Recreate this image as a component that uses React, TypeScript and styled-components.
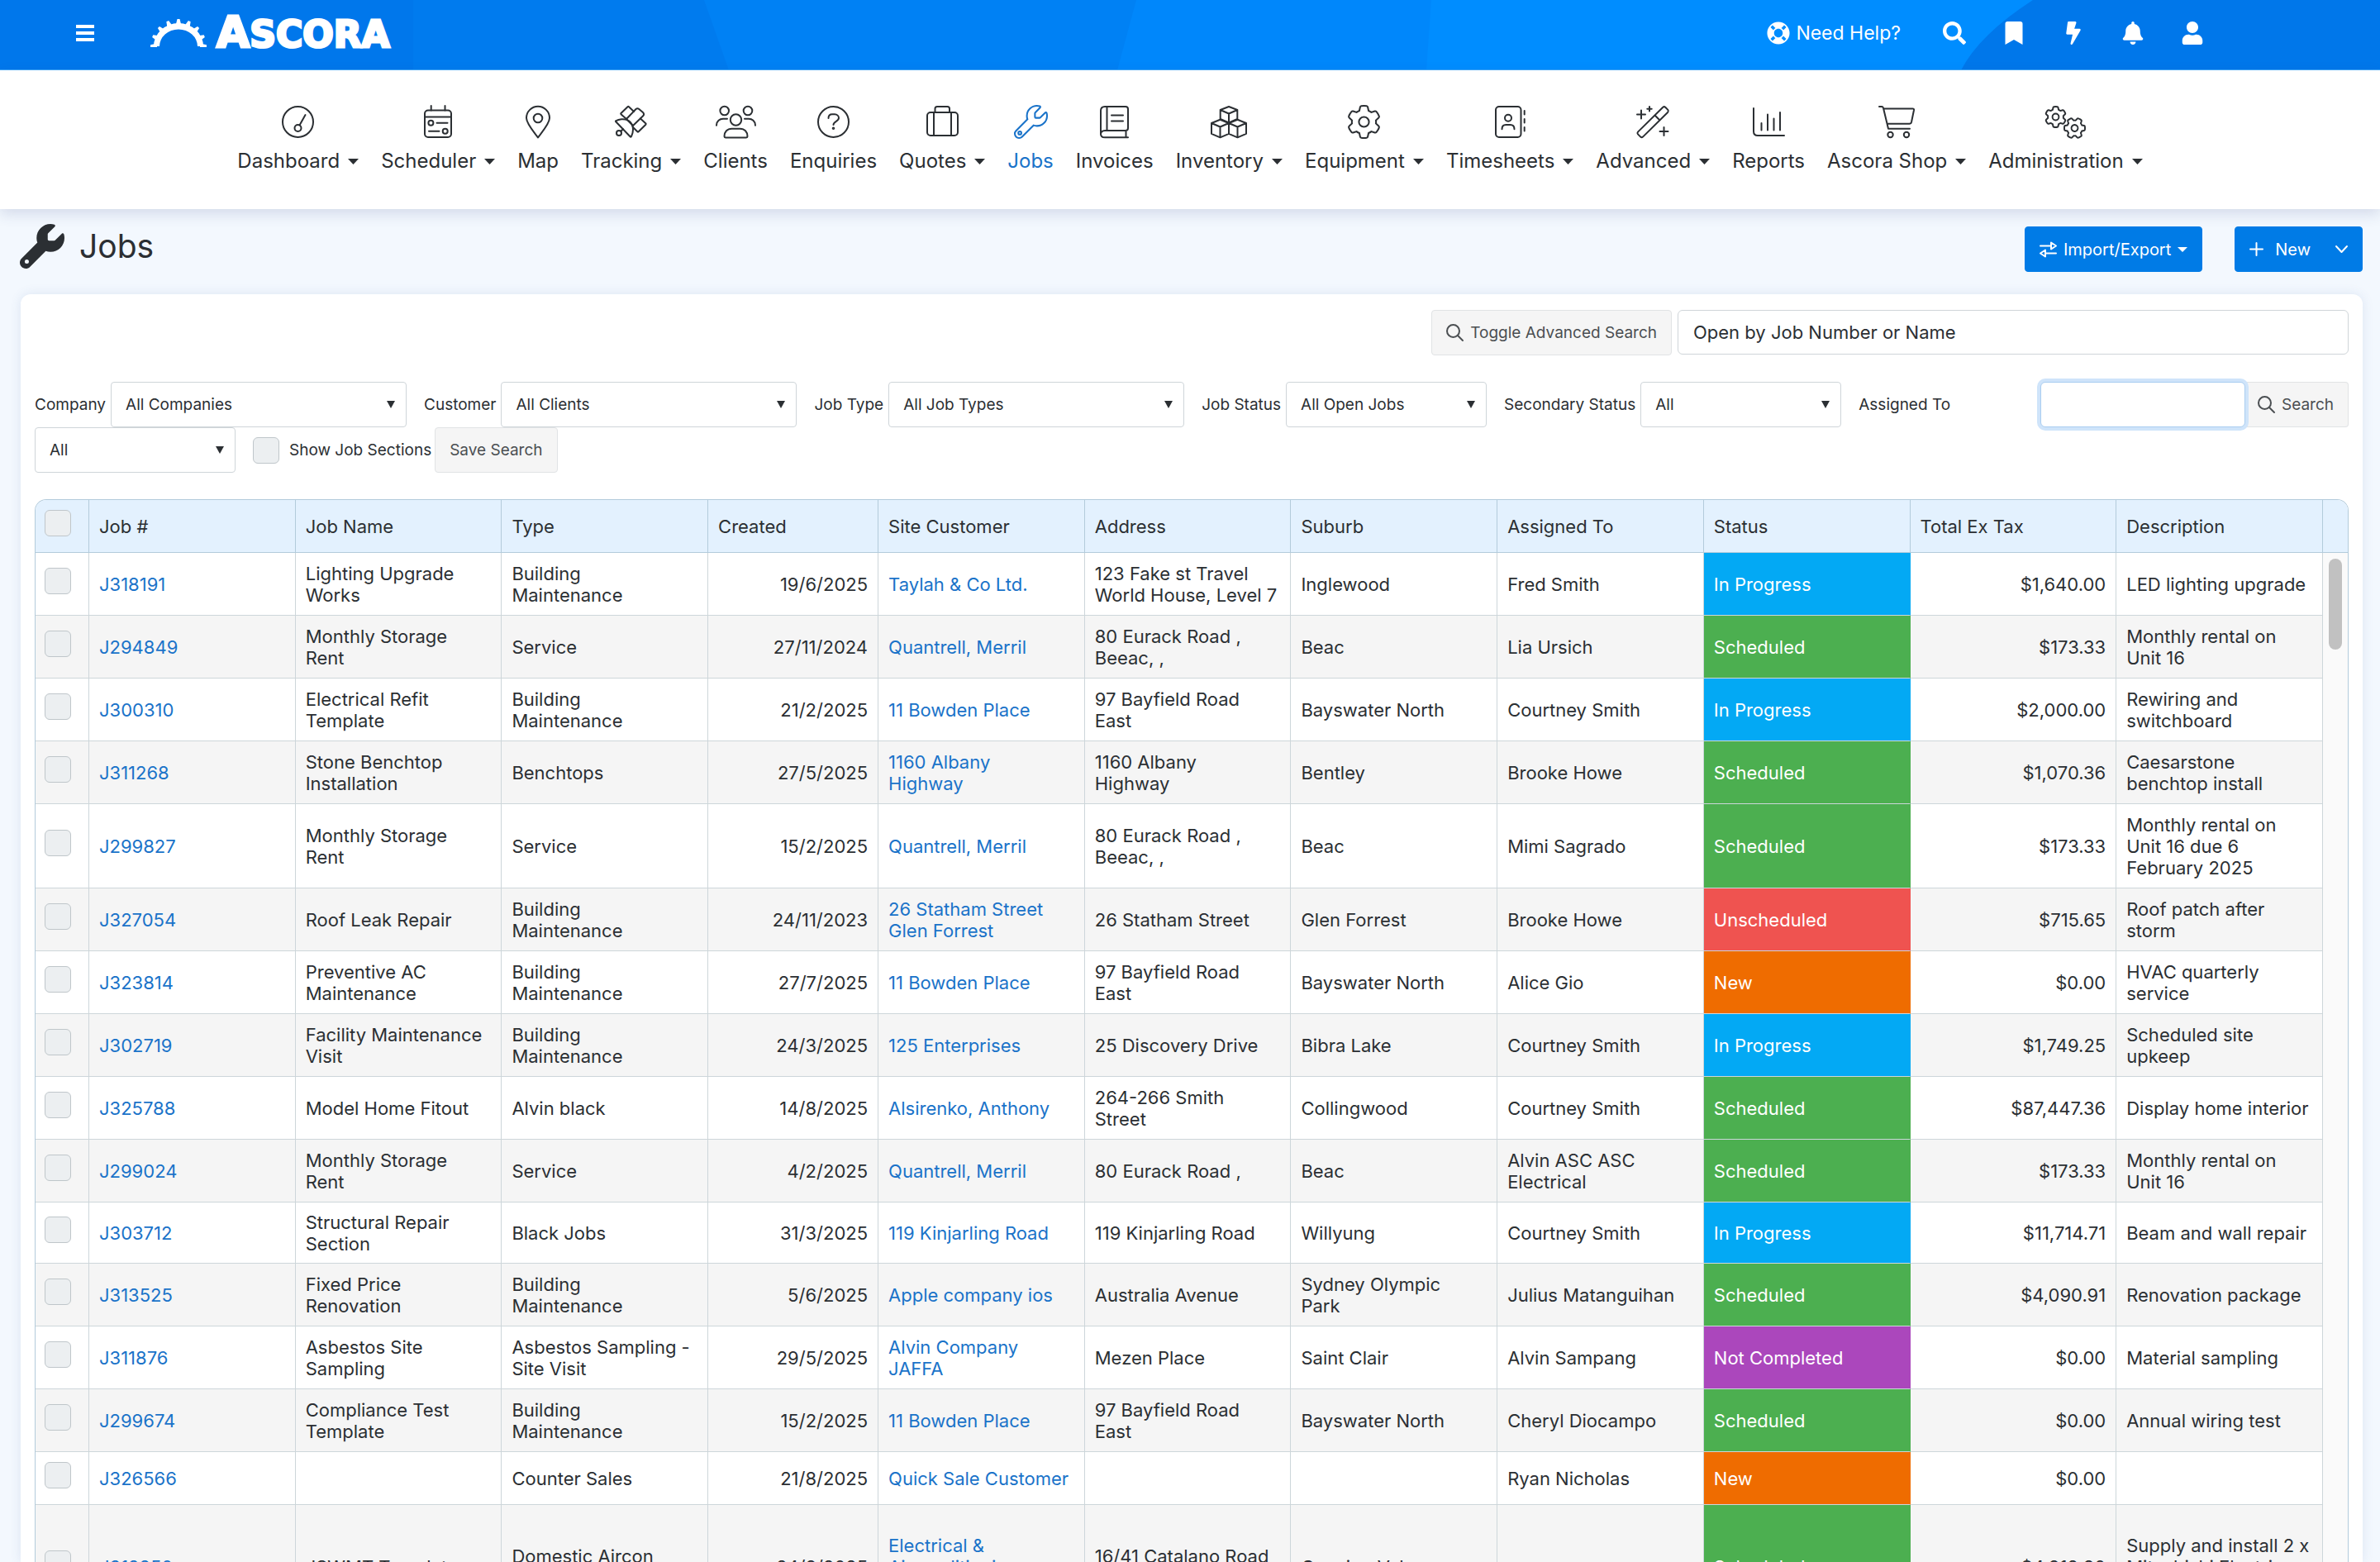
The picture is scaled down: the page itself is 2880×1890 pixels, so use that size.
import React from "react";
import styled, { createGlobalStyle, css } from "styled-components";
import { FaBell, FaBolt, FaBookmark, FaLifeRing, FaSearch, FaUser } from "react-icons/fa";
import { FaGear, FaWrench } from "react-icons/fa6";

const color = {
  text: "#2b2f33",
  link: "#1a73c9",
  primary: "#007be6",
  page: "#f3f8fe",
  soft: "#f5f5f5",
  line: "#cdd6da",
  control: "#cfd5d9",
  head: "#e3f1fe",
  headLine: "#b3cbdb",
};

const GlobalStyle = createGlobalStyle`
  *, *::before, *::after { box-sizing: border-box; }
  body {
    margin: 0;
    background: ${color.page};
    color: ${color.text};
    font-family: Inter, "Liberation Sans", sans-serif;
    font-size: 22px;
  }
  button, input, select { font: inherit; color: inherit; margin: 0; }
  a { text-decoration: none; }
`;

/* ---------- shell ---------- */

const Page = styled.div`
  display: flex;
  flex-direction: column;
  height: 100vh;
  overflow: hidden;
`;

const TopBar = styled.header`
  position: relative;
  display: flex;
  align-items: center;
  justify-content: space-between;
  height: 85px;
  flex: none;
  padding: 0 213px 0 92px;
  background: #008dff;
  color: #fff;
`;

const Backdrop = styled.svg`
  position: absolute;
  inset: 0;
  width: 100%;
  height: 100%;
`;

const BarGroup = styled.div<{ $gap: number }>`
  position: relative;
  display: flex;
  align-items: center;
  gap: ${(p) => p.$gap}px;
  padding-bottom: 6px;
`;

const IconButton = styled.button`
  display: flex;
  padding: 0;
  border: 0;
  background: none;
  color: #fff;
  cursor: pointer;
`;

const Brand = styled.a`
  display: flex;
  align-items: flex-end;
  gap: 12px;
  color: #fff;
`;

const BrandName = styled.span`
  display: block;
  font-family: "DejaVu Sans", sans-serif;
  font-weight: 700;
  font-size: 44px;
  line-height: 30px;
  -webkit-text-stroke: 3px #fff;

  &::first-letter {
    font-size: 52px;
  }
`;

const HelpLink = styled.a`
  display: flex;
  align-items: center;
  gap: 7px;
  margin-right: 7px;
  color: #fff;
  font-size: 23px;
`;

/* ---------- main navigation ---------- */

const Nav = styled.nav`
  position: relative;
  display: flex;
  justify-content: center;
  gap: 27px;
  flex: none;
  padding: 43px 0;
  background: #fff;
  box-shadow: 0 6px 16px rgba(50, 70, 130, 0.16);
`;

const NavItem = styled.a<{ $active?: boolean }>`
  display: flex;
  flex-direction: column;
  align-items: center;
  gap: 13px;
  color: ${(p) => (p.$active ? color.link : color.text)};
`;

const NavLabel = styled.span`
  display: flex;
  align-items: center;
  gap: 10px;
  font-size: 24px;
  line-height: 30px;
`;

const Outline = styled.svg`
  overflow: visible;
  fill: none;
  stroke: currentColor;
  stroke-width: 2;
  stroke-linecap: round;
  stroke-linejoin: round;
`;

const OutlineWrench = styled(FaWrench)`
  overflow: visible;
  && {
    fill: none;
    stroke: currentColor;
    stroke-width: 27;
  }
`;

const OutlineGear = styled(FaGear)`
  overflow: visible;
  && {
    fill: none;
    stroke: currentColor;
    stroke-width: ${(p) => (Number(p.size) < 30 ? 40 : 27)};
  }
`;

/* ---------- title row ---------- */

const TitleRow = styled.div`
  display: flex;
  justify-content: space-between;
  align-items: flex-start;
  flex: none;
  height: 103px;
  padding: 17px 21px 0 24px;
`;

const Title = styled.h1`
  display: flex;
  align-items: center;
  gap: 18px;
  margin: 0;
  font-size: 39px;
  font-weight: 400;
  line-height: 56px;
`;

const Actions = styled.div`
  display: flex;
  gap: 39px;
  padding-top: 4px;
`;

const Button = styled.button<{ $tone?: "primary" | "soft" }>`
  display: inline-flex;
  align-items: center;
  gap: 8px;
  height: 55px;
  padding: 0 17px;
  border: 1px solid ${color.line};
  border-radius: 4px;
  background: ${color.soft};
  color: #4b4f52;
  font-size: 19px;
  white-space: nowrap;
  cursor: pointer;

  ${(p) =>
    p.$tone === "primary" &&
    css`
      border-color: ${color.primary};
      background: ${color.primary};
      color: #fff;
      font-size: 20px;
    `}
  ${(p) =>
    p.$tone === "soft" &&
    css`
      border-color: #e1e3e5;
    `}
`;

const NewLabel = styled.span`
  padding: 0 22px 0 6px;
`;

/* ---------- panel and filters ---------- */

const Panel = styled.main`
  display: flex;
  flex-direction: column;
  flex: 1;
  min-height: 0;
  margin: 0 21px 0 25px;
  padding: 19px 17px 0;
  border-radius: 12px 12px 0 0;
  background: #fff;
  box-shadow: 0 0 14px rgba(60, 90, 160, 0.12);
`;

const SearchRow = styled.div`
  display: flex;
  justify-content: flex-end;
  gap: 7px;
  margin-bottom: 32px;
`;

const TextInput = styled.input`
  height: 54px;
  padding: 0 18px;
  border: 1px solid ${color.control};
  border-radius: 6px;
  background: #fff;
  outline: none;

  &::placeholder {
    color: ${color.text};
    opacity: 1;
  }
`;

const JobLookup = styled(TextInput)`
  width: 29%;
`;

const FilterRow = styled.div`
  display: flex;
  align-items: flex-start;
  justify-content: space-between;
  margin-bottom: 32px;
`;

const Filters = styled.form`
  display: flex;
  flex-wrap: wrap;
  align-items: center;
  width: 84%;
  font-size: 19px;
`;

const FilterLabel = styled.label`
  margin-right: 6px;
  line-height: 24px;
`;

const SelectBox = styled.span<{ $wide?: boolean }>`
  display: grid;
  align-items: center;
  width: ${(p) => (p.$wide ? 358 : 243)}px;
  margin-right: 21px;

  > * {
    grid-area: 1 / 1;
  }
  > svg {
    justify-self: end;
    margin-right: 14px;
    pointer-events: none;
  }
`;

const Select = styled.select`
  width: 100%;
  height: 55px;
  padding: 0 40px 0 17px;
  border: 1px solid ${color.control};
  border-radius: 4px;
  background: #fff;
  appearance: none;
`;

const Checkbox = styled.input.attrs({ type: "checkbox" })`
  display: block;
  flex: none;
  width: 32px;
  height: 32px;
  margin: 0;
  border: 1px solid #bfc6ca;
  border-radius: 6px;
  background: #eceff1;
  appearance: none;
`;

const SectionsToggle = styled.label`
  display: flex;
  align-items: center;
  gap: 12px;
  margin-right: 4px;
`;

const QuickSearch = styled.form`
  display: flex;
`;

const QuickInput = styled(TextInput)`
  position: relative;
  width: 248px;
  height: 55px;
  border-color: #a9cdf0;
  box-shadow: 0 0 0 4px #cfe4fa;
`;

const QuickButton = styled(Button)`
  padding: 0 17px 0 15px;
  border-left: 0;
  border-radius: 0 4px 4px 0;
`;

/* ---------- jobs grid ---------- */

const Grid = styled.section`
  display: flex;
  flex: 1;
  min-height: 0;
  align-items: flex-start;
  overflow: hidden;
  border: 1px solid ${color.headLine};
  border-bottom: 0;
  border-radius: 14px 14px 0 0;
`;

const Table = styled.table`
  flex: 1;
  width: 100%;
  table-layout: fixed;
  border-collapse: separate;
  border-spacing: 0;
  line-height: 26px;
`;

const Col = styled.col<{ $w?: number }>`
  ${(p) => p.$w && `width: ${p.$w}px;`}
`;

const Th = styled.th`
  height: 64px;
  padding: 0 12px;
  border-right: 1px solid ${color.headLine};
  border-bottom: 1px solid ${color.headLine};
  background: ${color.head};
  font-weight: 400;
  text-align: left;
`;

const Tr = styled.tr<{ $height: number }>`
  height: ${(p) => p.$height}px;
  &:nth-child(even) {
    background: ${color.soft};
  }
`;

const Td = styled.td<{ $end?: boolean }>`
  padding: 10px 12px;
  border-right: 1px solid ${color.line};
  border-bottom: 1px solid ${color.line};
  text-align: ${(p) => (p.$end ? "right" : "left")};
  white-space: pre-line;
`;

const checkCell = css`
  padding: 0 11px 8px;
`;
const CheckTh = styled(Th)`
  ${checkCell}
`;
const CheckTd = styled(Td)`
  ${checkCell}
`;

const StatusTd = styled(Td)<{ $bg: string }>`
  border-right-color: ${(p) => p.$bg};
  background: ${(p) => p.$bg};
  color: #fff;
`;

const CellLink = styled.a`
  color: ${color.link};
`;

const Gutter = styled.div`
  flex: none;
  align-self: stretch;
  width: 30px;
  background: #fafafa;

  &::before {
    content: "";
    display: block;
    height: 64px;
    border-bottom: 1px solid ${color.headLine};
    background: ${color.head};
  }
`;

const Thumb = styled.div`
  width: 16px;
  height: 110px;
  margin: 7px auto 0;
  border-radius: 8px;
  background: #c1c1c1;
`;

/* ---------- icons ---------- */

const Draw = ({ w, h = 39, children }: { w: number; h?: number; children: React.ReactNode }) => (
  <Outline width={w} height={h} viewBox={`0 0 ${w} ${h}`} aria-hidden="true">
    {children}
  </Outline>
);

const Caret = ({ w = 13, h = 7 }: { w?: number; h?: number }) => (
  <svg width={w} height={h} viewBox="0 0 13 7" preserveAspectRatio="none" fill="currentColor" aria-hidden="true">
    <path d="M0 0H13L6.5 7Z" />
  </svg>
);

const Lens = () => (
  <Draw w={21} h={21}>
    <circle cx="8.5" cy="8.5" r="7.5" />
    <path d="M14 14L20 20" />
  </Draw>
);

const icons = {
  dashboard: (
    <Draw w={39}>
      <circle cx="19.5" cy="19.5" r="18.5" />
      <circle cx="19.5" cy="27" r="4" />
      <path d="M21.5 23.5L28.5 11" />
    </Draw>
  ),
  scheduler: (
    <Draw w={34}>
      <rect x="1" y="5.5" width="32" height="32.5" rx="4" />
      <path d="M8.7 0V5.5M25.5 0V5.5M1 13.5H33M15.5 20.7H28.5M6 30.7H18.5" />
      <circle cx="8.4" cy="20.7" r="3" />
      <circle cx="25.7" cy="30.7" r="3" />
    </Draw>
  ),
  map: (
    <Draw w={30}>
      <path d="M15 38.5C12 34 1 22 1 14.8A14 14 0 0 1 29 14.8C29 22 18 34 15 38.5Z" />
      <circle cx="15" cy="15" r="5.3" />
    </Draw>
  ),
  tracking: (
    <Draw w={39}>
      <path d="M14 16L7.5 10.2Q7 9.5 7.5 9L15.5 1.2Q16.3 .6 17 1.2L23 7" />
      <path d="M14 16L25.5 4Q27.3 2.6 29.3 4L34 8Q36 10 34.4 12L22 24Z" />
      <path d="M31 15.5L37.5 21.4Q38 22 37.4 22.7L28.7 31.3Q28 31.9 27.3 31.3L22 26" />
      <path d="M1 19L18.5 37.2C19 38 19.6 37.8 20 37C25 26 20 15.5 8 16.3C5 16.6 3 17.3 1 18.3Z" />
      <circle cx="5" cy="33" r="3" />
      <path d="M7.3 30.8L10 28.2" />
    </Draw>
  ),
  clients: (
    <Draw w={49}>
      <circle cx="10.7" cy="6" r="5.3" />
      <circle cx="39" cy="6" r="5.3" />
      <circle cx="24.5" cy="17" r="6.7" />
      <path d="M1 23.7C1 18.5 5 15.8 9 15.8H14M48 23.7C48 18.5 44 15.8 40 15.8H35" />
      <path d="M10.5 37C10.5 31.5 14 27.7 19.5 27.7H29.5C35 27.7 38.5 31.5 38.5 37Q38.5 38.4 37 38.4H12Q10.5 38.4 10.5 37Z" />
    </Draw>
  ),
  enquiries: (
    <Draw w={39}>
      <circle cx="19.5" cy="19.5" r="18.5" />
      <path d="M13.5 15C13.5 12 15.5 10.3 18 10.3H21C24 10.3 26 12.3 26 14.8C26 19 19.5 18.6 19.5 23" />
      <circle cx="19.5" cy="27.3" r=".8" />
    </Draw>
  ),
  quotes: (
    <Draw w={39}>
      <rect x="1" y="8" width="37" height="28" rx="4" />
      <path d="M10.5 8V3.5Q10.5 1 13 1H25.5Q28 1 28 3.5V8M9 8V36M30 8V36" />
    </Draw>
  ),
  jobs: <OutlineWrench size={39} />,
  invoices: (
    <Draw w={35}>
      <path d="M6 1H31Q34 1 34 4V27Q34 30 31 30H6Q1 30.3 1 34.2Q1 38.3 6 38.3H34M1 34V6Q1 1 6 1M8.5 1V30M31.5 30V38.3M14 11.5H28M14 18.5H28" />
    </Draw>
  ),
  inventory: (
    <Draw w={44}>
      <path d="M22 1L32.3 5V16L22 20.5L11.7 16V5ZM11.7 5L22 9.5L32.3 5M22 9.5V20.5" />
      <path d="M11.5 16.8L22 21V33.8L11.5 38.3L1 33.8V21ZM1 21L11.5 25.5L22 21M11.5 25.5V38.3" />
      <path d="M32.5 16.8L43 21V33.8L32.5 38.3L22 33.8V21ZM22 21L32.5 25.5L43 21M32.5 25.5V38.3" />
    </Draw>
  ),
  equipment: <OutlineGear size={39} />,
  timesheets: (
    <Draw w={37}>
      <rect x="1" y="1" width="30.5" height="37" rx="4" />
      <circle cx="16" cy="14.8" r="4" />
      <path d="M8.5 28.3C8.5 25 10.5 23 13.3 23H18.5C21.5 23 23.5 25 23.5 28.3M35.7 6V10.5M35.7 16V20.5M35.7 26V30.5" />
    </Draw>
  ),
  advanced: (
    <Draw w={40}>
      <path d="M32.3 1.7Q33.8 .6 35.2 1.7L38.3 4.9Q39.4 6.3 38.3 7.7L8 37.6Q6.6 38.8 5.2 37.6L2 34.4Q.8 33 2 31.6ZM22.5 11.5L28.5 17.5" />
      <path d="M6 5.5V15.5M1 10.5H11M16 1V6.5M13.3 3.7H18.7M33.5 26V36M28.5 31H38.5" />
    </Draw>
  ),
  reports: (
    <Draw w={39}>
      <path d="M1 3V31Q1 36 6 36H38M10.5 21V29.5M18 10.5V29.5M25.5 15.5V29.5M33 8V29.5" />
    </Draw>
  ),
  shop: (
    <Draw w={44}>
      <path d="M1 1H4Q5.5 1 6 2.7L12 27.7H38M6.3 3.5H41.5Q43.3 3.5 43 5.2L40 19.7Q39.5 21.7 37.5 21.7H10.7" />
      <circle cx="14.5" cy="35" r="3.2" />
      <circle cx="34" cy="35" r="3.2" />
    </Draw>
  ),
  admin: (
    <Draw w={49}>
      <OutlineGear x={0} y={1} size={25} />
      <g transform="rotate(30 35.5 27)">
        <OutlineGear x={23} y={14.5} size={25} />
      </g>
    </Draw>
  ),
};

/* ---------- data ---------- */

const navItems: { label: string; icon: keyof typeof icons; menu?: boolean }[] = [
  { label: "Dashboard", icon: "dashboard", menu: true },
  { label: "Scheduler", icon: "scheduler", menu: true },
  { label: "Map", icon: "map" },
  { label: "Tracking", icon: "tracking", menu: true },
  { label: "Clients", icon: "clients" },
  { label: "Enquiries", icon: "enquiries" },
  { label: "Quotes", icon: "quotes", menu: true },
  { label: "Jobs", icon: "jobs" },
  { label: "Invoices", icon: "invoices" },
  { label: "Inventory", icon: "inventory", menu: true },
  { label: "Equipment", icon: "equipment", menu: true },
  { label: "Timesheets", icon: "timesheets", menu: true },
  { label: "Advanced", icon: "advanced", menu: true },
  { label: "Reports", icon: "reports" },
  { label: "Ascora Shop", icon: "shop", menu: true },
  { label: "Administration", icon: "admin", menu: true },
];

const filters: { id: string; label: string; value: string; wide?: boolean }[] = [
  { id: "company", label: "Company", value: "All Companies", wide: true },
  { id: "customer", label: "Customer", value: "All Clients", wide: true },
  { id: "job-type", label: "Job Type", value: "All Job Types", wide: true },
  { id: "job-status", label: "Job Status", value: "All Open Jobs" },
  { id: "secondary-status", label: "Secondary Status", value: "All" },
  { id: "assigned-to", label: "Assigned To", value: "All" },
];

const statusColor = {
  "In Progress": "#03a9f4",
  Scheduled: "#4caf50",
  Unscheduled: "#ef5350",
  New: "#ef6c00",
  "Not Completed": "#ab47bc",
};

const headings = [
  "Job #",
  "Job Name",
  "Type",
  "Created",
  "Site Customer",
  "Address",
  "Suburb",
  "Assigned To",
  "Status",
  "Total Ex Tax",
  "Description",
];

type Job = [
  id: string,
  name: string,
  type: string,
  created: string,
  customer: string,
  address: string,
  suburb: string,
  assigned: string,
  status: keyof typeof statusColor,
  total: string,
  description: string,
  height?: number
];

const jobs: Job[] = [
  ["J318191", "Lighting Upgrade\nWorks", "Building\nMaintenance", "19/6/2025", "Taylah & Co Ltd.", "123 Fake st Travel\nWorld House, Level 7", "Inglewood", "Fred Smith", "In Progress", "$1,640.00", "LED lighting upgrade"],
  ["J294849", "Monthly Storage\nRent", "Service", "27/11/2024", "Quantrell, Merril", "80 Eurack Road ,\nBeeac, ,", "Beac", "Lia Ursich", "Scheduled", "$173.33", "Monthly rental on\nUnit 16"],
  ["J300310", "Electrical Refit\nTemplate", "Building\nMaintenance", "21/2/2025", "11 Bowden Place", "97 Bayfield Road\nEast", "Bayswater North", "Courtney Smith", "In Progress", "$2,000.00", "Rewiring and\nswitchboard"],
  ["J311268", "Stone Benchtop\nInstallation", "Benchtops", "27/5/2025", "1160 Albany\nHighway", "1160 Albany\nHighway", "Bentley", "Brooke Howe", "Scheduled", "$1,070.36", "Caesarstone\nbenchtop install"],
  ["J299827", "Monthly Storage\nRent", "Service", "15/2/2025", "Quantrell, Merril", "80 Eurack Road ,\nBeeac, ,", "Beac", "Mimi Sagrado", "Scheduled", "$173.33", "Monthly rental on\nUnit 16 due 6\nFebruary 2025", 102],
  ["J327054", "Roof Leak Repair", "Building\nMaintenance", "24/11/2023", "26 Statham Street\nGlen Forrest", "26 Statham Street", "Glen Forrest", "Brooke Howe", "Unscheduled", "$715.65", "Roof patch after\nstorm"],
  ["J323814", "Preventive AC\nMaintenance", "Building\nMaintenance", "27/7/2025", "11 Bowden Place", "97 Bayfield Road\nEast", "Bayswater North", "Alice Gio", "New", "$0.00", "HVAC quarterly\nservice"],
  ["J302719", "Facility Maintenance\nVisit", "Building\nMaintenance", "24/3/2025", "125 Enterprises", "25 Discovery Drive", "Bibra Lake", "Courtney Smith", "In Progress", "$1,749.25", "Scheduled site\nupkeep"],
  ["J325788", "Model Home Fitout", "Alvin black", "14/8/2025", "Alsirenko, Anthony", "264-266 Smith\nStreet", "Collingwood", "Courtney Smith", "Scheduled", "$87,447.36", "Display home interior"],
  ["J299024", "Monthly Storage\nRent", "Service", "4/2/2025", "Quantrell, Merril", "80 Eurack Road ,", "Beac", "Alvin ASC ASC\nElectrical", "Scheduled", "$173.33", "Monthly rental on\nUnit 16"],
  ["J303712", "Structural Repair\nSection", "Black Jobs", "31/3/2025", "119 Kinjarling Road", "119 Kinjarling Road", "Willyung", "Courtney Smith", "In Progress", "$11,714.71", "Beam and wall repair", 74],
  ["J313525", "Fixed Price\nRenovation", "Building\nMaintenance", "5/6/2025", "Apple company ios", "Australia Avenue", "Sydney Olympic\nPark", "Julius Matanguihan", "Scheduled", "$4,090.91", "Renovation package"],
  ["J311876", "Asbestos Site\nSampling", "Asbestos Sampling -\nSite Visit", "29/5/2025", "Alvin Company\nJAFFA", "Mezen Place", "Saint Clair", "Alvin Sampang", "Not Completed", "$0.00", "Material sampling"],
  ["J299674", "Compliance Test\nTemplate", "Building\nMaintenance", "15/2/2025", "11 Bowden Place", "97 Bayfield Road\nEast", "Bayswater North", "Cheryl Diocampo", "Scheduled", "$0.00", "Annual wiring test"],
  ["J326566", "", "Counter Sales", "21/8/2025", "Quick Sale Customer", "", "", "Ryan Nicholas", "New", "$0.00", "", 64],
  ["J312250", "JSWMT Template", "Domestic Aircon\nInstallation", "24/8/2025", "Electrical &\nAirconditioning\nServices", "16/41 Catalano Road\nUnit 2", "Canning Vale", "", "Scheduled", "$4,812.80", "Supply and install 2 x\nMitsubishi Electric\nsplit systems", 150],
];

/* ---------- parts ---------- */

const cogTeeth = [-88, -67, -45, -23, 0, 23, 45, 67, 88];

const BrandMark = () => (
  <svg width="68" height="34" viewBox="0 0 68 34" aria-hidden="true">
    <path d="M4 33A30 28 0 0 1 64 33H57A23 20.5 0 0 0 11 33Z" fill="#fff" />
    {cogTeeth.map((angle) => (
      <path key={angle} d="M30.5 8L32.5 0H35.5L37.5 8Z" fill="#fff" transform={`rotate(${angle} 34 34)`} />
    ))}
  </svg>
);

const TopBarBackdrop = () => (
  <Backdrop viewBox="0 0 2880 85" preserveAspectRatio="none" aria-hidden="true">
    <path d="M0 0H1732L1726 85H0Z" fill="#0087fb" />
    <path d="M0 0H1375L1352 85H0Z" fill="#0081f4" />
    <path d="M0 0H852L882 85H0Z" fill="#007bee" />
    <path d="M0 0H500V85H0Z" fill="#0077eb" />
    <path d="M2460 0Q2395 42 2373 85H2880V0Z" fill="#0077ea" />
    <path d="M0 84H2880V85H0Z" fill="#3da4f8" />
  </Backdrop>
);

const JobRow = ({ job }: { job: Job }) => {
  const [id, name, type, created, customer, address, suburb, assigned, status, total, description, height = 76] = job;
  return (
    <Tr $height={height}>
      <CheckTd>
        <Checkbox aria-label={`Select ${id}`} />
      </CheckTd>
      <Td>
        <CellLink href="#">{id}</CellLink>
      </Td>
      <Td>{name}</Td>
      <Td>{type}</Td>
      <Td $end>{created}</Td>
      <Td>
        <CellLink href="#">{customer}</CellLink>
      </Td>
      <Td>{address}</Td>
      <Td>{suburb}</Td>
      <Td>{assigned}</Td>
      <StatusTd $bg={statusColor[status]}>{status}</StatusTd>
      <Td $end>{total}</Td>
      <Td>{description}</Td>
    </Tr>
  );
};

export default function App() {
  return (
    <>
      <GlobalStyle />
      <Page>
        <TopBar>
          <TopBarBackdrop />
          <BarGroup $gap={68}>
            <IconButton aria-label="Menu">
              <svg width="22" height="20" viewBox="0 0 22 20" fill="currentColor" aria-hidden="true">
                <path d="M0 0H22V4H0ZM0 8H22V12H0ZM0 16H22V20H0Z" />
              </svg>
            </IconButton>
            <Brand href="#" aria-label="Ascora">
              <BrandMark />
              <BrandName>ASCORA</BrandName>
            </Brand>
          </BarGroup>
          <BarGroup $gap={44}>
            <HelpLink href="#">
              <FaLifeRing size={28} />
              Need Help?
            </HelpLink>
            <IconButton aria-label="Search">
              <FaSearch size={28} />
            </IconButton>
            <IconButton aria-label="Bookmarks">
              <FaBookmark size={28} />
            </IconButton>
            <IconButton aria-label="Quick actions">
              <FaBolt size={28} />
            </IconButton>
            <IconButton aria-label="Notifications">
              <FaBell size={28} />
            </IconButton>
            <IconButton aria-label="Account">
              <FaUser size={28} />
            </IconButton>
          </BarGroup>
        </TopBar>

        <Nav>
          {navItems.map((item) => (
            <NavItem key={item.label} href="#" $active={item.label === "Jobs"}>
              {icons[item.icon]}
              <NavLabel>
                {item.label}
                {item.menu && <Caret />}
              </NavLabel>
            </NavItem>
          ))}
        </Nav>

        <TitleRow>
          <Title>
            <FaWrench size={54} aria-hidden="true" />
            Jobs
          </Title>
          <Actions>
            <Button $tone="primary">
              <Draw w={21} h={20}>
                <path d="M1 5.5H14M14 1.5L20 5.5L14 9.5ZM20 14.5H7M7 10.5L1 14.5L7 18.5Z" />
              </Draw>
              Import/Export
              <Caret w={12} h={6} />
            </Button>
            <Button $tone="primary">
              <Draw w={17} h={17}>
                <path d="M8.5 1V16M1 8.5H16" />
              </Draw>
              <NewLabel>New</NewLabel>
              <Draw w={15} h={9}>
                <path d="M1 1L7.5 8L14 1" />
              </Draw>
            </Button>
          </Actions>
        </TitleRow>

        <Panel>
          <SearchRow>
            <Button $tone="soft">
              <Lens />
              Toggle Advanced Search
            </Button>
            <JobLookup aria-label="Open by Job Number or Name" placeholder="Open by Job Number or Name" />
          </SearchRow>

          <FilterRow>
            <Filters>
              {filters.map((f) => (
                <React.Fragment key={f.id}>
                  <FilterLabel htmlFor={f.id}>{f.label}</FilterLabel>
                  <SelectBox $wide={f.wide}>
                    <Select id={f.id} defaultValue={f.value}>
                      <option>{f.value}</option>
                    </Select>
                    <Caret w={10} h={9} />
                  </SelectBox>
                </React.Fragment>
              ))}
              <SectionsToggle>
                <Checkbox />
                Show Job Sections
              </SectionsToggle>
              <Button type="button" $tone="soft">
                Save Search
              </Button>
            </Filters>
            <QuickSearch>
              <QuickInput aria-label="Search jobs" />
              <QuickButton type="button" $tone="soft">
                <Lens />
                Search
              </QuickButton>
            </QuickSearch>
          </FilterRow>

          <Grid>
            <Table>
              <colgroup>
                <Col $w={65} />
                <Col />
                <Col />
                <Col />
                <Col $w={206} />
                <Col />
                <Col />
                <Col />
                <Col />
                <Col />
                <Col />
                <Col />
              </colgroup>
              <thead>
                <tr>
                  <CheckTh>
                    <Checkbox aria-label="Select all jobs" />
                  </CheckTh>
                  {headings.map((h) => (
                    <Th key={h} scope="col">
                      {h}
                    </Th>
                  ))}
                </tr>
              </thead>
              <tbody>
                {jobs.map((job) => (
                  <JobRow key={job[0]} job={job} />
                ))}
              </tbody>
            </Table>
            <Gutter>
              <Thumb />
            </Gutter>
          </Grid>
        </Panel>
      </Page>
    </>
  );
}
